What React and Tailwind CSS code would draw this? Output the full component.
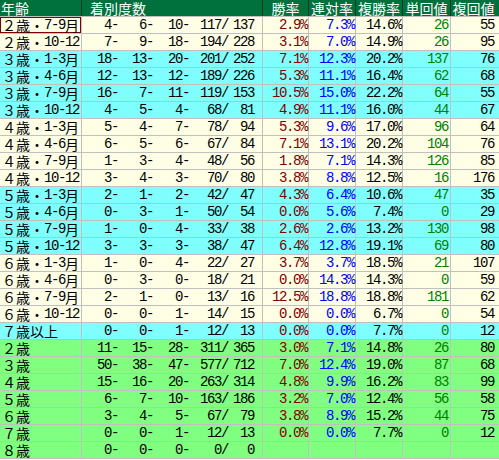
import React from "react";

const Y = "bg-[#ffffe6]";
const C = "bg-[#80ffff]";
const G = "bg-[#80ff80]";

const rows = [
  ["２歳・7-9月", ["4", "6", "10", "117", "137"], "2.9%", "7.3%", "14.6%", "26", "55", Y],
  ["２歳・10-12", ["7", "9", "18", "194", "228"], "3.1%", "7.0%", "14.9%", "26", "95", Y],
  ["３歳・1-3月", ["18", "13", "20", "201", "252"], "7.1%", "12.3%", "20.2%", "137", "76", C],
  ["３歳・4-6月", ["12", "13", "12", "189", "226"], "5.3%", "11.1%", "16.4%", "62", "68", C],
  ["３歳・7-9月", ["16", "7", "11", "119", "153"], "10.5%", "15.0%", "22.2%", "64", "55", C],
  ["３歳・10-12", ["4", "5", "4", "68", "81"], "4.9%", "11.1%", "16.0%", "44", "67", C],
  ["４歳・1-3月", ["5", "4", "7", "78", "94"], "5.3%", "9.6%", "17.0%", "96", "64", Y],
  ["４歳・4-6月", ["6", "5", "6", "67", "84"], "7.1%", "13.1%", "20.2%", "104", "76", Y],
  ["４歳・7-9月", ["1", "3", "4", "48", "56"], "1.8%", "7.1%", "14.3%", "126", "85", Y],
  ["４歳・10-12", ["3", "4", "3", "70", "80"], "3.8%", "8.8%", "12.5%", "16", "176", Y],
  ["５歳・1-3月", ["2", "1", "2", "42", "47"], "4.3%", "6.4%", "10.6%", "47", "35", C],
  ["５歳・4-6月", ["0", "3", "1", "50", "54"], "0.0%", "5.6%", "7.4%", "0", "29", C],
  ["５歳・7-9月", ["1", "0", "4", "33", "38"], "2.6%", "2.6%", "13.2%", "130", "98", C],
  ["５歳・10-12", ["3", "3", "3", "38", "47"], "6.4%", "12.8%", "19.1%", "69", "80", C],
  ["６歳・1-3月", ["1", "0", "4", "22", "27"], "3.7%", "3.7%", "18.5%", "21", "107", Y],
  ["６歳・4-6月", ["0", "3", "0", "18", "21"], "0.0%", "14.3%", "14.3%", "0", "59", Y],
  ["６歳・7-9月", ["2", "1", "0", "13", "16"], "12.5%", "18.8%", "18.8%", "181", "62", Y],
  ["６歳・10-12", ["0", "0", "1", "14", "15"], "0.0%", "0.0%", "6.7%", "0", "54", Y],
  ["７歳以上", ["0", "0", "1", "12", "13"], "0.0%", "0.0%", "7.7%", "0", "12", C],
  ["２歳", ["11", "15", "28", "311", "365"], "3.0%", "7.1%", "14.8%", "26", "80", G],
  ["３歳", ["50", "38", "47", "577", "712"], "7.0%", "12.4%", "19.0%", "87", "68", G],
  ["４歳", ["15", "16", "20", "263", "314"], "4.8%", "9.9%", "16.2%", "83", "99", G],
  ["５歳", ["6", "7", "10", "163", "186"], "3.2%", "7.0%", "12.4%", "56", "58", G],
  ["６歳", ["3", "4", "5", "67", "79"], "3.8%", "8.9%", "15.2%", "44", "75", G],
  ["７歳", ["0", "0", "1", "12", "13"], "0.0%", "0.0%", "7.7%", "0", "12", G],
  ["８歳", ["0", "0", "0", "0", "0"], "", "", "", "", "", G],
];

const MONO = "font-['Liberation_Mono',monospace] text-[14px] tracking-[-1.4px]";
const CJK = "font-['Noto_Sans_CJK_JP',sans-serif]";

function Label({ text }) {
  const parts = text.split(/([\x00-\x7f]+)/).filter(Boolean);
  return (
    <span className="flex items-center whitespace-nowrap">
      {parts.map((p, i) =>
        /^[\x00-\x7f]+$/.test(p) ? (
          <span key={i} className={MONO}>{p}</span>
        ) : (
          <span key={i} className={`${CJK} text-[14px]`}>{p}</span>
        )
      )}
    </span>
  );
}

function Num({ children, w, className = "" }) {
  return (
    <div className={`${w} shrink-0 h-full border-r border-[#c0c0c0] flex items-center justify-end pr-[1px] ${MONO} ${className}`}>
      {children}
    </div>
  );
}

export default function App() {
  return (
    <div className="min-h-screen w-[499px] bg-[#ffffe6] overflow-hidden">
      <div className={`flex w-[499px] h-[17px] bg-[#00703c] border-b border-[#c0c0c0] text-white ${CJK} text-[14px] leading-[16px]`}>
        <div className="w-[82px] shrink-0 border-r border-[#003a1c] pl-[1px] flex items-center">年齢</div>
        <div className="w-[181px] shrink-0 border-r border-[#003a1c] pl-[8px] flex items-center">着別度数</div>
        <div className="w-[46px] shrink-0 border-r border-[#003a1c] flex items-center justify-center">勝率</div>
        <div className="w-[47px] shrink-0 border-r border-[#003a1c] flex items-center justify-center">連対率</div>
        <div className="w-[47px] shrink-0 border-r border-[#003a1c] flex items-center justify-center">複勝率</div>
        <div className="w-[48px] shrink-0 border-r border-[#003a1c] flex items-center justify-center">単回値</div>
        <div className="flex-1 flex items-center justify-center pr-[3px]">複回値</div>
      </div>
      {rows.map((r, i) => (
        <div key={i} className={`flex w-[499px] h-[17px] border-b border-[#c0c0c0] ${r[7]} text-black leading-[16px]`}>
          <div
            className={`w-[82px] shrink-0 h-full border-r border-[#c0c0c0] pl-[2px] flex items-center ${
              i === 0 ? "shadow-[inset_0_0_0_1px_#800000]" : ""
            }`}
          >
            <Label text={r[0]} />
          </div>
          <div className={`w-[181px] shrink-0 h-full border-r border-[#c0c0c0] grid grid-cols-[36px_35px_36px_39px_26px] items-center ${MONO}`}>
            <span className="text-right">{r[1][0]}-</span>
            <span className="text-right">{r[1][1]}-</span>
            <span className="text-right">{r[1][2]}-</span>
            <span className="text-right">{r[1][3]}/</span>
            <span className="text-right">{r[1][4]}</span>
          </div>
          <Num w="w-[46px]" className="text-[#800000]">{r[2]}</Num>
          <Num w="w-[47px]" className="text-[#0000ff]">{r[3]}</Num>
          <Num w="w-[47px]">{r[4]}</Num>
          <Num w="w-[48px]" className="text-[#008000] pr-[2px]">{r[5]}</Num>
          <div className={`flex-1 h-full flex items-center justify-end pr-[5px] ${MONO}`}>{r[6]}</div>
        </div>
      ))}
    </div>
  );
}
